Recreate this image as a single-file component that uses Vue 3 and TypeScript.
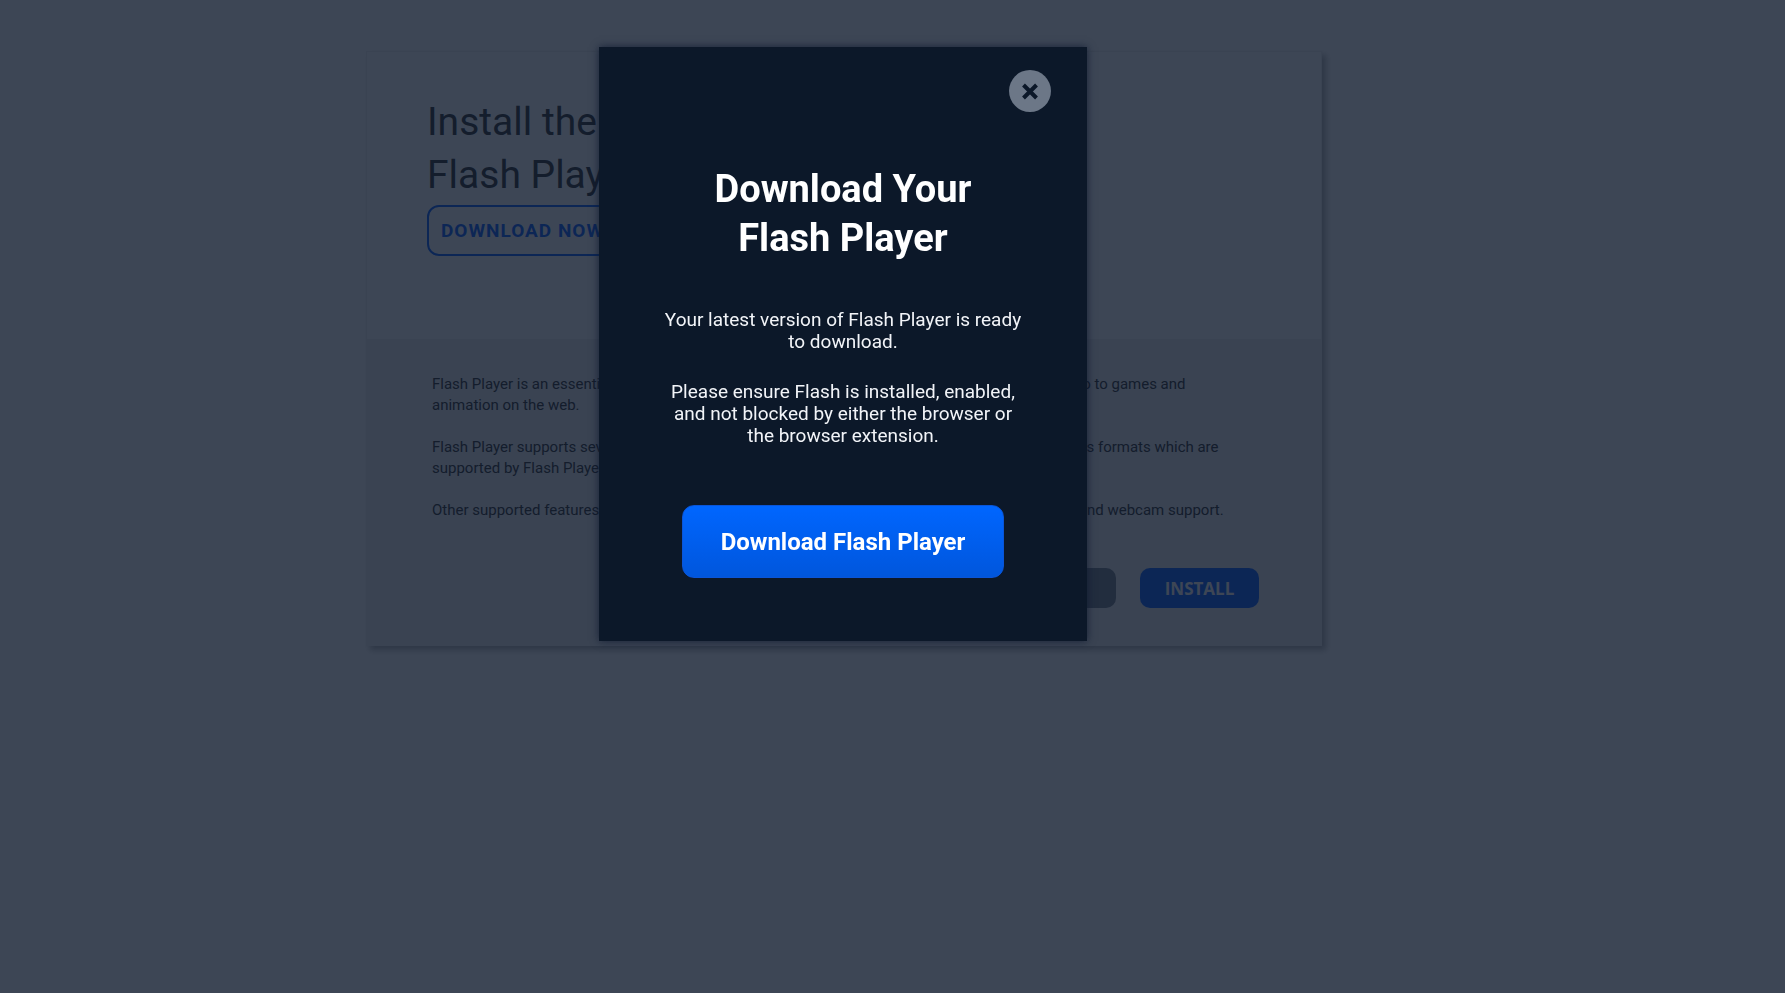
<script setup lang="ts">
import { ref } from 'vue'

const open = ref(true)

const features: string[] = [
  'Flash Player is an essential plug-in for your browser that enables you to enjoy everything from video to games and animation on the web.',
  'Flash Player supports several different file types and also a number of new video and audio streams formats which are supported by Flash Player.',
  'Other supported features include the support for bitmap graphics, plus 3D rendering, microphone and webcam support.',
]
</script>

<template>
  <div class="page">
    <main class="card">
      <section class="intro">
        <h1>Install the latest<br />Flash Player</h1>
        <button class="outline" type="button" @click="open = true">DOWNLOAD NOW</button>
      </section>
      <section class="details">
        <p v-for="text in features" :key="text">{{ text }}</p>
        <div class="actions">
          <button class="action cancel" type="button">CANCEL</button>
          <button class="action install" type="button" @click="open = true">INSTALL</button>
        </div>
      </section>
    </main>

    <div v-if="open" class="overlay">
      <div class="modal" role="dialog" aria-modal="true" aria-labelledby="modal-title">
        <button class="close" type="button" aria-label="Close" @click="open = false">
          <svg viewBox="0 0 42 42" aria-hidden="true">
            <circle cx="21" cy="21" r="21" />
            <path d="M14.5 15 27.5 28M27.5 15 14.5 28" />
          </svg>
        </button>
        <h2 id="modal-title">Download Your<br />Flash Player</h2>
        <p>Your latest version of Flash Player is ready to download.</p>
        <p>Please ensure Flash is installed, enabled, and not blocked by either the browser or the browser extension.</p>
        <button class="download" type="button">Download Flash Player</button>
      </div>
    </div>
  </div>
</template>

<style>
body {
  margin: 0;
  background: #fff;
}
</style>

<style scoped>
.page {
  box-sizing: border-box;
  min-height: 100vh;
  padding: 51px 97px 51px 0;
  font-family: Roboto, "Liberation Sans", sans-serif;
  color: #333;
}
button {
  font-family: inherit;
  cursor: pointer;
}
.card {
  box-sizing: border-box;
  max-width: 956px;
  margin: 0 auto;
  border: 1px solid #efefef;
  box-shadow: 4px 4px 6px rgba(0, 0, 0, 0.3);
}
.intro {
  box-sizing: border-box;
  min-height: 287px;
  padding: 44px 60px 0;
}
h1 {
  margin: 0;
  font-size: 39px;
  line-height: 53px;
  font-weight: 400;
}
.outline {
  display: block;
  height: 51px;
  margin-top: 3px;
  padding: 0 12px;
  border: 2px solid #0d62fe;
  border-radius: 12px;
  background: transparent;
  color: #0d62fe;
  font-size: 19px;
  font-weight: 700;
  letter-spacing: 1px;
}
.details {
  padding: 35px 62px 37px 65px;
  background: #eee;
}
.details p {
  max-width: 800px;
  margin: 0 0 21px;
  font-size: 15px;
  line-height: 21px;
}
.actions {
  display: flex;
  justify-content: flex-end;
  gap: 24px;
  margin-top: 47px;
}
.action {
  min-width: 119px;
  height: 40px;
  padding: 0 34px;
  border: 0;
  border-radius: 10px;
  color: #fff;
  font: 700 17px "Open Sans", "Noto Sans", sans-serif;
}
.cancel {
  background: #77808c;
}
.install {
  padding: 0 24px;
  background: #0d62fe;
}
.overlay {
  position: fixed;
  inset: 0;
  box-sizing: border-box;
  padding: 47px 99px 47px 0;
  overflow: auto;
  background: rgba(12, 24, 42, 0.8);
}
.modal {
  box-sizing: border-box;
  display: flex;
  flex-direction: column;
  align-items: center;
  max-width: 488px;
  margin: 0 auto;
  padding: 23px 60px 63px;
  background: #0c1829;
  box-shadow: 0 0 8px rgba(12, 24, 48, 0.8);
  color: #f2f4f8;
  text-align: center;
}
.close {
  align-self: flex-end;
  width: 42px;
  height: 42px;
  margin-right: -24px;
  padding: 0;
  border: 0;
  background: transparent;
}
.close svg {
  display: block;
  width: 42px;
  height: 42px;
}
.close circle {
  fill: #6c7787;
}
.close path {
  fill: none;
  stroke: #0c1829;
  stroke-width: 4;
}
h2 {
  margin: 53px 0 46px;
  color: #fff;
  font-size: 38px;
  line-height: 49px;
  font-weight: 700;
}
.modal p {
  margin: 0 0 28px;
  font-size: 19px;
  line-height: 22px;
}
.download {
  box-sizing: border-box;
  height: 73px;
  margin-top: 30px;
  padding: 0 38px;
  border: 1px solid #0a55d8;
  border-radius: 12px;
  background: linear-gradient(#0066ff, #0056dc);
  color: #fff;
  font-size: 24px;
  font-weight: 700;
}
</style>
